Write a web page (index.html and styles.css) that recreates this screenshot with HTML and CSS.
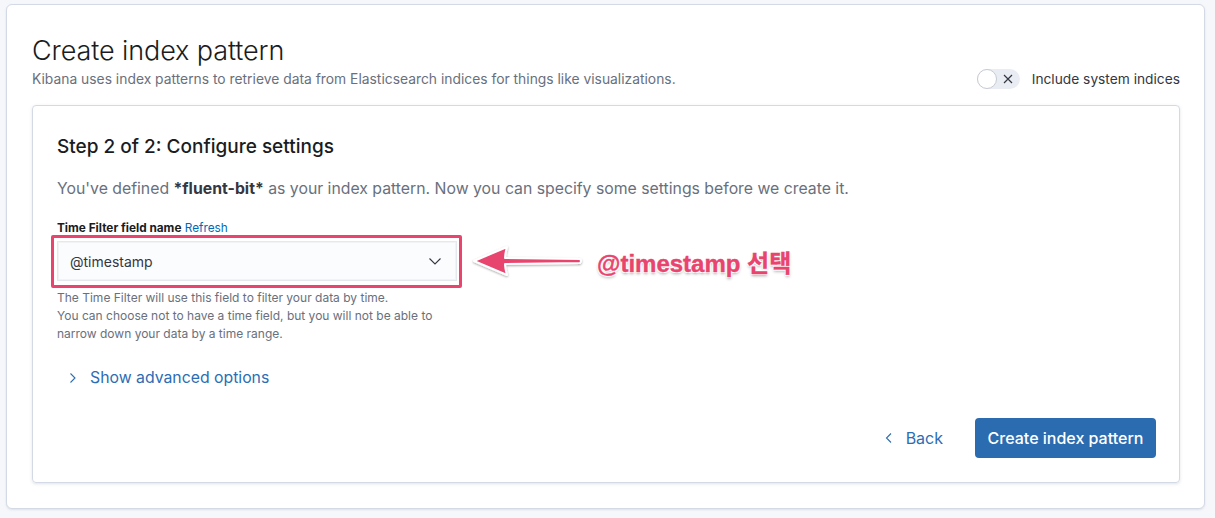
FILE: index.html
```html
<!DOCTYPE html>
<html>
<head>
<meta charset="utf-8">
<link rel="stylesheet" href="styles.css">
</head>
<body>
<div class="page">
  <div class="outer">
    <div class="header">
      <div class="header-text">
        <h1 class="title">Create index pattern</h1>
        <p class="subtitle">Kibana uses index patterns to retrieve data from Elasticsearch indices for things like visualizations.</p>
      </div>
      <div class="switch">
        <span class="track">
          <span class="knob"></span>
          <svg class="x" width="12" height="12" viewBox="0 0 12 12"><path d="M2 2 L10 10 M10 2 L2 10" stroke="#343741" stroke-width="1.2" fill="none"/></svg>
        </span>
        <span class="switch-label">Include system indices</span>
      </div>
    </div>
    <div class="inner">
      <h2 class="step">Step 2 of 2: Configure settings</h2>
      <p class="desc">You've defined <b>*fluent-bit*</b> as your index pattern. Now you can specify some settings before we create it.</p>
      <div class="field">
        <div class="label"><b>Time Filter field name</b> <span class="link">Refresh</span></div>
        <div class="select-wrap">
          <div class="select">
            <span>@timestamp</span>
            <svg width="14" height="14" viewBox="0 0 14 14"><path d="M1.5 4.5 L7 10 L12.5 4.5" stroke="#343741" stroke-width="1.1" fill="none"/></svg>
          </div>
          <div class="highlight"></div>
          <div class="annotation">
            <svg class="arrow" width="114" height="40" viewBox="0 0 114 40">
              <defs>
                <filter id="sh" x="-10%" y="-30%" width="120%" height="160%">
                  <feDropShadow dx="0" dy="1" stdDeviation="1" flood-color="#000" flood-opacity="0.35"/>
                </filter>
              </defs>
              <g filter="url(#sh)">
                <path d="M3 20 L36 6 Q34 13 34 17 L109 18 Q111 20 109 22 L34 23 Q34 27 36 34 Z" fill="#e8446e" stroke="#fff" stroke-width="2" stroke-linejoin="round"/>
              </g>
            </svg>
            <span class="note">@timestamp 선택</span>
          </div>
        </div>
        <div class="help">The Time Filter will use this field to filter your data by time.<br>You can choose not to have a time field, but you will not be able to<br>narrow down your data by a time range.</div>
      </div>
      <div class="advanced">
        <svg width="12" height="12" viewBox="0 0 12 12"><path d="M3.5 1.5 L8 6 L3.5 10.5" stroke="#2d6db3" stroke-width="1.1" fill="none"/></svg>
        <span>Show advanced options</span>
      </div>
      <div class="actions">
        <div class="back">
          <svg width="12" height="12" viewBox="0 0 12 12"><path d="M8 1.5 L3.5 6 L8 10.5" stroke="#2d6db3" stroke-width="1.1" fill="none"/></svg>
          <span>Back</span>
        </div>
        <div class="primary">Create index pattern</div>
      </div>
    </div>
  </div>
</div>
</body>
</html>
```
FILE: styles.css
```css
* { box-sizing: border-box; }
html, body { margin: 0; padding: 0; }
body {
  background: #f6f7fb;
  font-family: Inter, "Noto Sans", "Noto Sans CJK KR", sans-serif;
  color: #343741;
  width: 1215px;
  height: 518px;
  overflow: hidden;
}
.page { padding: 4px 10px 0 6px; }
.outer {
  background: #fff;
  border: 1px solid #d3dae6;
  border-radius: 6px;
  box-shadow: 0 1px 2px rgba(152,162,179,0.25);
  height: 505px;
  padding: 26px 24px 0 25px;
  display: flex;
  flex-direction: column;
}
.header {
  display: flex;
  justify-content: space-between;
  align-items: flex-end;
}
.title {
  margin: 0;
  font-size: 27px;
  line-height: 40px;
  font-weight: 300;
  color: #1a1c21;
  letter-spacing: -0.1px;
}
.subtitle {
  margin: -2px 0 0 0;
  font-size: 13.85px;
  line-height: 20px;
  color: #69707d;
}
.switch {
  display: flex;
  align-items: center;
  gap: 12px;
}
.track {
  position: relative;
  width: 43px;
  height: 20px;
  border-radius: 10px;
  background: #e9edf3;
  display: inline-block;
}
.knob {
  position: absolute;
  left: 0; top: 0;
  width: 20px; height: 20px;
  border-radius: 50%;
  background: #fff;
  border: 1px solid #c5cad3;
}
.track .x { position: absolute; left: 25px; top: 4px; }
.switch-label { font-size: 13.75px; color: #343741; }

.inner {
  margin-top: 16px;
  border: 1px solid #d3dae6;
  border-radius: 4px;
  box-shadow: 0 1px 3px rgba(152,162,179,0.3);
  height: 378px;
  padding: 27px 23px 24px 24px;
  display: flex;
  flex-direction: column;
}
.step {
  margin: 0;
  font-size: 19px;
  line-height: 28px;
  font-weight: 500;
  color: #1a1c21;
}
.desc {
  margin: 16px 0 0 0;
  font-size: 15.8px;
  line-height: 24px;
  color: #69707d;
}
.desc b { color: #343741; font-weight: 700; }
.field { margin-top: 19px; }
.label {
  font-size: 11.8px;
  line-height: 16px;
  color: #1a1c21;
}
.label b { font-weight: 700; }
.link { color: #006bb8; }
.select-wrap {
  position: relative;
  margin-top: 5px;
  width: 400px;
}
.select {
  height: 40px;
  width: 400px;
  background: #fbfcfd;
  border: 1px solid #e4e8ef;
  box-shadow: inset 0 0 0 1px rgba(16,22,26,0.04);
  display: flex;
  align-items: center;
  justify-content: space-between;
  padding: 0 14px 0 12px;
  font-size: 14px;
  color: #343741;
}
.highlight {
  position: absolute;
  left: -6px; top: -6px;
  width: 411px; height: 53px;
  border: 3px solid #e8446e;
  border-radius: 2px;
}
.annotation {
  position: absolute;
  left: 414px;
  top: 0;
  display: flex;
  align-items: center;
  gap: 12px;
  white-space: nowrap;
}
.note {
  font-family: "Liberation Sans", "Noto Sans CJK KR", sans-serif;
  font-weight: 700;
  font-size: 24px;
  color: #e8446e;
  -webkit-text-stroke: 0.4px #e8446e;
  text-shadow: 1px 1px 0 #fff, -1px -1px 0 #fff, 1px -1px 0 #fff, -1px 1px 0 #fff, 0 2px 3px rgba(0,0,0,0.35);
}
.help {
  margin-top: 8px;
  font-size: 12px;
  line-height: 18px;
  color: #69707d;
}
.advanced {
  margin-top: 25px;
  margin-left: 10px;
  display: flex;
  align-items: center;
  gap: 11px;
  font-size: 15.8px;
  color: #2d6db3;
}
.actions {
  margin-top: auto;
  display: flex;
  justify-content: flex-end;
  align-items: center;
  gap: 32px;
}
.back {
  display: flex;
  align-items: center;
  gap: 11px;
  font-size: 16px;
  color: #2d6db3;
}
.primary {
  background: #2b6bb0;
  color: #fff;
  font-size: 16px;
  font-weight: 500;
  height: 40px;
  width: 181px;
  border-radius: 4px;
  display: flex;
  align-items: center;
  justify-content: center;
}
```
